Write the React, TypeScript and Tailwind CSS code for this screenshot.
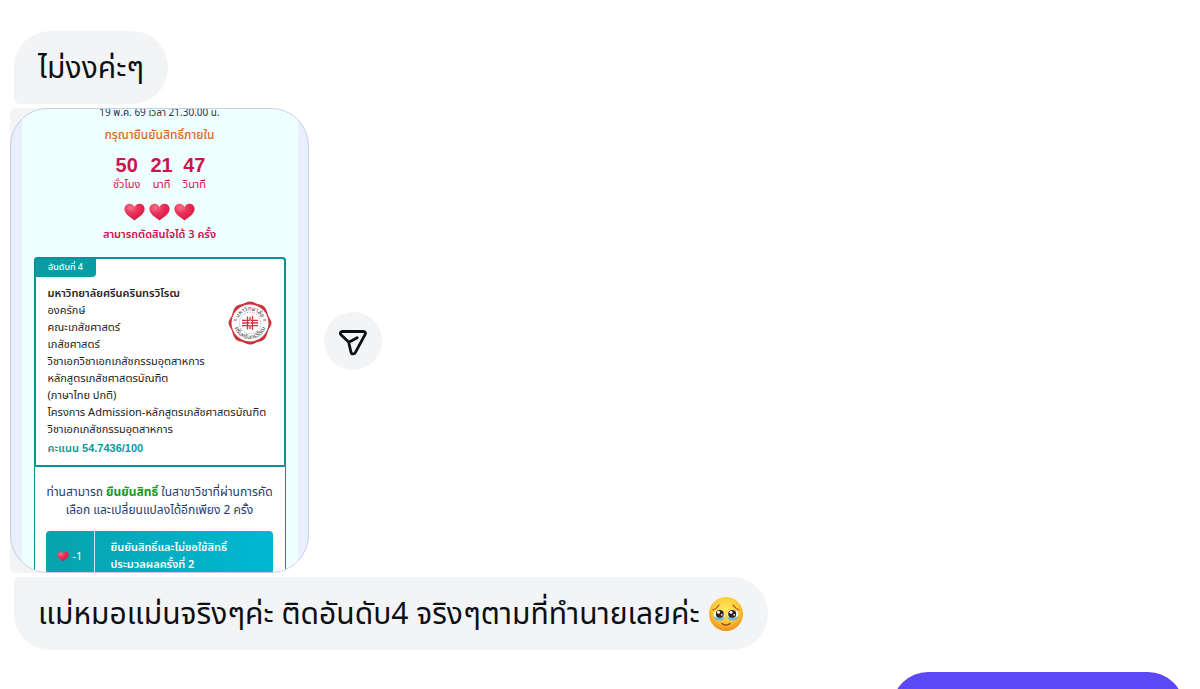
import type { ReactNode } from 'react'

const countdown = [
  { value: '50', unit: 'ชั่วโมง' },
  { value: '21', unit: 'นาที' },
  { value: '47', unit: 'วินาที' },
]

const programLines = [
  'องครักษ์',
  'คณะเภสัชศาสตร์',
  'เภสัชศาสตร์',
  'วิชาเอกวิชาเอกเภสัชกรรมอุตสาหการ',
  'หลักสูตรเภสัชศาสตรบัณฑิต',
  '(ภาษาไทย ปกติ)',
  'โครงการ Admission-หลักสูตรเภสัชศาสตรบัณฑิต',
  'วิชาเอกเภสัชกรรมอุตสาหการ',
]

const Heart = ({ className }: { className: string }) => (
  <svg viewBox="0 0 22 18" className={className} aria-hidden="true">
    <defs>
      <radialGradient id="heart" cx="30%" cy="22%" r="85%">
        <stop offset="0" stopColor="#f4708c" />
        <stop offset="0.45" stopColor="#ea3157" />
        <stop offset="1" stopColor="#d51540" />
      </radialGradient>
    </defs>
    <path
      d="M11 17.8C8.5 15.8 .4 11.6 .4 5.9 .4 2.7 2.8.4 5.8.4 8.3.4 10.2 1.8 11 3.7 11.8 1.8 13.7.4 16.2.4 19.2.4 21.6 2.7 21.6 5.9 21.6 11.6 13.5 15.8 11 17.8Z"
      fill="url(#heart)"
    />
  </svg>
)

const Seal = () => (
  <svg viewBox="0 0 44 44" className="size-11 shrink-0" role="img" aria-label="มหาวิทยาลัยศรีนครินทรวิโรฒ">
    <path
      d="M22 .5C25 .5 27 2.2 29.7 3 32.5 3.7 35.2 4 37 6.500 38.900 9 39.200 11.800 40.200 14.500 41.300 17.200 43.500 19 43.500 22S41.300 26.800 40.200 29.500C39.200 32.200 38.900 35 37 37.500 35.200 40 32.500 40.300 29.700 41 27 41.800 25 43.500 22 43.500S17 41.800 14.300 41C11.500 40.300 8.800 40 7 37.500 5.100 35 4.800 32.200 3.800 29.500 2.700 26.800.5 25 .5 22S2.700 17.200 3.800 14.500C4.800 11.800 5.100 9 7 6.500 8.800 4 11.500 3.700 14.300 3 17 2.200 19 .5 22 .5Z"
      fill="#c9363f"
    />
    <circle cx="22" cy="22" r="18.500" fill="#fff" />
    <circle cx="22" cy="22" r="10.800" fill="none" stroke="#77777a" strokeWidth="0.8" strokeDasharray="1 1.5" />
    <defs>
      <path id="seal-top" d="M9.500 22A12.500 12.500 0 0 1 34.500 22" />
      <path id="seal-bottom" d="M6 22A16 16 0 0 0 38 22" />
    </defs>
    <g fill="#35383b" fontSize="6" textAnchor="middle" fontFamily="'Noto Sans Thai', 'Noto Sans', sans-serif">
      <text>
        <textPath href="#seal-top" startOffset="50%">มหาวิทยาลัย</textPath>
      </text>
      <text>
        <textPath href="#seal-bottom" startOffset="50%">ศรีนครินทรวิโรฒ</textPath>
      </text>
    </g>
    <path d="M5.800 19h3M35.200 19h3" stroke="#c9363f" />
    <path
      d="M14 19.300h16M14 22h16M14 24.700h16M19.500 15.500v13M24.500 15v14M22 16v3M22 25v3"
      stroke="#c9363f"
      strokeWidth="1.300"
      fill="none"
    />
    <path d="M15 20.600h3M26 23.400h3M22 19.300v5.400" stroke="#fff" strokeWidth="0.8" />
  </svg>
)

const TearyFace = () => (
  <svg viewBox="0 0 36 36" className="ml-2 size-9 shrink-0" role="img" aria-label="🥹">
    <defs>
      <radialGradient id="face" cx="50%" cy="35%" r="68%">
        <stop offset="0" stopColor="#ffe75d" />
        <stop offset="0.55" stopColor="#fdcb3c" />
        <stop offset="1" stopColor="#ef8718" />
      </radialGradient>
    </defs>
    <circle cx="18" cy="18" r="17" fill="url(#face)" />
    <path d="M5 14C7.500 13 9.500 11.500 11 9M31 14C28.500 13 26.500 11.500 25 9" stroke="#9a5418" strokeWidth="1.200" fill="none" strokeLinecap="round" />
    <ellipse cx="11.200" cy="18.500" rx="5.400" ry="4.600" fill="#fff" />
    <ellipse cx="24.800" cy="18.500" rx="5.400" ry="4.600" fill="#fff" />
    <circle cx="11.800" cy="18" r="4" fill="#32211d" />
    <circle cx="24.200" cy="18" r="4" fill="#32211d" />
    <circle cx="10.500" cy="16.300" r="1.500" fill="#fff" />
    <circle cx="23" cy="16.300" r="1.500" fill="#fff" />
    <circle cx="13.700" cy="18.800" r="0.9" fill="#fff" />
    <circle cx="26.200" cy="18.800" r="0.9" fill="#fff" />
    <path d="M5.700 20C8 22 14 22.500 16.500 20.500 16 24 13.500 25 10.500 24.500 7.500 24 6 22.500 5.700 20ZM30.300 20C28 22 22 22.500 19.500 20.500 20 24 22.500 25 25.500 24.500 28.500 24 30 22.500 30.300 20Z" fill="#69bce4" />
    <path d="M14 27.500C16 29.600 20 29.600 22 27.500" stroke="#8a4317" strokeWidth="1.300" fill="none" strokeLinecap="round" />
  </svg>
)

const Bubble = ({ className, children }: { className: string; children: ReactNode }) => (
  <div
    className={`ml-[14px] flex h-[73px] w-fit shrink-0 items-center rounded-[36px] bg-[#f3f4f6] px-6 text-[30px] text-[#0c1014] whitespace-nowrap ${className}`}
  >
    {children}
  </div>
)

const ResultCard = () => (
  <div className="flex h-[465px] w-[299px] justify-center overflow-hidden rounded-[38px] border border-[#c5cfdf] bg-[#e8f0fd]">
    <div className="w-[276px] shrink-0 bg-[#efffff] px-3 text-center whitespace-nowrap">
      <p className="-mt-1 text-[10px] leading-4 text-[#25324a]">19 พ.ค. 69 เวลา 21.30.00 น.</p>
      <p className="mt-1 text-[12px] leading-5 font-medium text-[#dc6a1b]">กรุณายืนยันสิทธิ์ภายใน</p>
      <dl className="mt-2 flex justify-center gap-[10px] text-[#cf1150]">
        {countdown.map((part) => (
          <div key={part.unit} className="flex flex-col-reverse">
            <dt className="text-[11px] leading-4">{part.unit}</dt>
            <dd className="font-['Liberation_Sans',sans-serif] text-[20px] leading-6 font-bold">{part.value}</dd>
          </div>
        ))}
      </dl>
      <div className="mt-[10px] flex justify-center gap-1">
        <Heart className="h-[18px] w-[21px]" />
        <Heart className="h-[18px] w-[21px]" />
        <Heart className="h-[18px] w-[21px]" />
      </div>
      <p className="mt-1 text-[11px] leading-5 font-semibold text-[#c8104e]">สามารถตัดสินใจได้ 3 ครั้ง</p>

      <div className="mt-3 rounded-t border-x border-[#0b9299] bg-white">
        <section className="-mx-px h-[210px] rounded-t border-2 border-[#0b9299] text-left">
          <p className="flex h-[18px] w-[60px] items-center justify-center rounded-br bg-[#079da3] text-[9px] font-medium text-white">
            อันดับที่ 4
          </p>
          <div className="flex justify-between px-3 pt-2 text-[11px] leading-[17px] text-[#222]">
            <div className="w-0">
              <h2 className="font-semibold">มหาวิทยาลัยศรีนครินทรวิโรฒ</h2>
              {programLines.map((line) => (
                <p key={line}>{line}</p>
              ))}
              <p className="font-['Liberation_Sans','Noto_Sans_Thai',sans-serif] leading-5 font-semibold text-[#079a9c]">คะแนน 54.7436/100</p>
            </div>
            <div className="pt-4">
              <Seal />
            </div>
          </div>
        </section>
        <p className="mt-4 text-[12px] leading-[18px] text-[#263b70]">
          ท่านสามารถ <strong className="text-[#159b28]">ยืนยันสิทธิ์</strong> ในสาขาวิชาที่ผ่านการคัด
          <br />
          เลือก และเปลี่ยนแปลงได้อีกเพียง 2 ครั้ง
        </p>
        <button
          type="button"
          className="mx-[11px] mt-3 flex h-[50px] w-[227px] rounded-t bg-linear-to-r from-[#06a3ad] to-[#00b8d3] text-left text-[11px] leading-[17px] font-semibold text-white"
        >
          <span className="flex h-full w-[49px] items-center justify-center gap-1 border-r border-white/80 font-normal">
            <Heart className="h-[11px] w-3" />
            -1
          </span>
          <span className="pt-2 pl-4">
            ยืนยันสิทธิ์และไม่ขอใช้สิทธิ์
            <br />
            ประมวลผลครั้งที่ 2
          </span>
        </button>
      </div>
    </div>
  </div>
)

const App = () => {
  return (
    <main className="flex h-screen flex-col gap-1 overflow-hidden bg-white pt-[31px] font-['Noto_Sans_Thai','Noto_Sans',sans-serif]">
      <Bubble className="rounded-bl-md">
        <p className="pt-1">ไม่งงค่ะๆ</p>
      </Bubble>

      <div className="ml-[10px] flex shrink-0 items-center gap-[15px]">
        <div className="rounded-l-md bg-linear-to-r from-[#f3f4f6] from-50% to-white to-50%">
          <ResultCard />
        </div>
        <button
          type="button"
          aria-label="Share"
          className="flex size-[58px] items-center justify-center rounded-full bg-[#f3f4f6]"
        >
          <svg viewBox="0 0 28 28" className="mt-1 size-7" fill="none" stroke="#0c1014" strokeWidth="2.800" strokeLinecap="round" strokeLinejoin="round">
            <path d="M3.500 2.500H24.500C26.300 2.500 27 4.100 26 5.600L16.300 23.700C15.300 25.600 12.400 25.300 12 23.200L9.800 13.700C9.700 13.200 9.500 12.800 9.100 12.500L2 5.700C.7 4.500 1.500 2.500 3.500 2.500ZM9.800 13.200 18.200 8.700" />
          </svg>
        </button>
      </div>

      <Bubble className="rounded-tl-md">
        <p className="pt-1">แม่หมอแม่นจริงๆค่ะ ติดอันดับ4 จริงๆตามที่ทำนายเลยค่ะ</p>
        <TearyFace />
      </Bubble>

      <div className="mt-[18px] mr-4 h-[73px] w-[292px] shrink-0 self-end rounded-[36px] bg-[#5b49f7]" />
    </main>
  )
}

export default App
